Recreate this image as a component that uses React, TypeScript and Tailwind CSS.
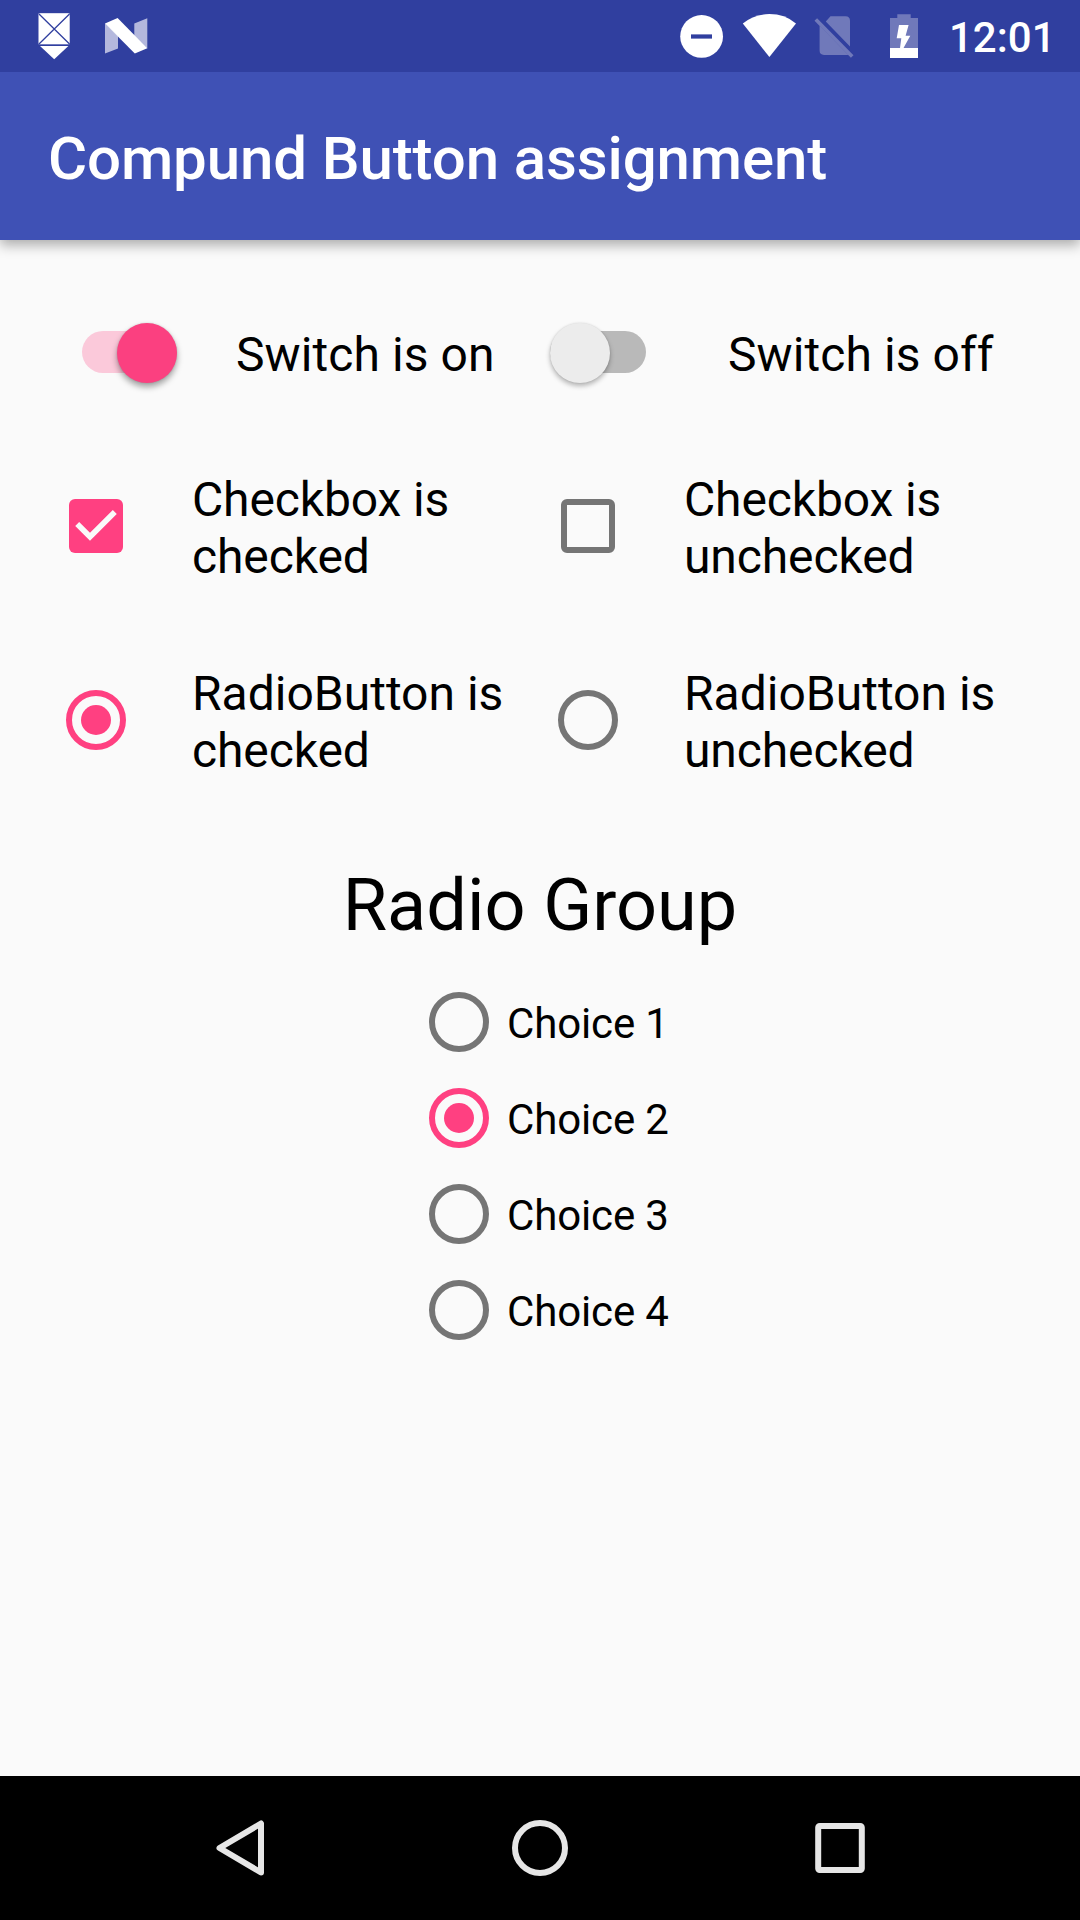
import React from "react";

function StatusBar() {
  return (
    <div className="relative z-10 flex h-[72px] items-start bg-[#303f9f] pl-[36px] text-white">
      <svg width="36" height="72" viewBox="36 0 36 72">
        <rect x="38.2" y="13" width="31.8" height="31.5" rx="1.5" fill="#b4b8dd" />
        <rect x="39" y="13.6" width="30.2" height="30.3" rx="1" fill="#fff" />
        <path d="M39 14L69.5 44M69.5 14L39 44" stroke="#303f9f" strokeWidth="1.3" />
        <path d="M40 46H68.4L54.2 59.3Z" fill="#fff" />
      </svg>
      <svg className="ml-[30px]" width="48" height="72" viewBox="102 0 48 72">
        <path d="M105 23.3L118 36V48.5L105 53.5ZM134.3 23.5L147.3 18.3V48.5L134.3 36Z" fill="#b4b8dd" />
        <path d="M105 23.5L117.6 18.1L147.3 48.3L134.8 53.5Z" fill="#fff" />
      </svg>
      <svg className="ml-[528px]" width="48" height="72" viewBox="678 0 48 72">
        <circle cx="701.6" cy="36.4" r="21.4" fill="#fff" />
        <rect x="691" y="34" width="21" height="5" fill="#303f9f" />
        <rect x="691" y="34" width="21" height="1" fill="#8189c4" />
        <rect x="691" y="38" width="21" height="1" fill="#8189c4" />
      </svg>
      <svg className="ml-[15px]" width="57" height="72" viewBox="741 0 57 72">
        <path d="M769.4 57L742.8 23.5Q754 14.1 769.4 14.1T796 23.5Z" fill="#fff" />
      </svg>
      <svg className="ml-[14px]" width="44" height="72" viewBox="812 0 44 72">
        <path d="M830.5 16.3H845.5Q850 16.3 850 20.8V46.5L825.8 21.4ZM819.6 25.5L848.5 54.9H824Q819.6 54.9 819.6 50.5Z" fill="#7079ba" />
        <path d="M815.8 19.5L852.2 56.5" stroke="#7079ba" strokeWidth="3.6" />
      </svg>
      <svg className="ml-[32px]" width="34" height="72" viewBox="888 0 34 72">
        <path d="M897.3 14.3H910.7V18H918V48H890V18H897.3Z" fill="#7079ba" />
        <rect x="890" y="48" width="28" height="10" fill="#fff" />
        <path d="M899 25H908.6L905.6 35.8H910.3L903.5 48H900L901.3 38.3H896.7Z" fill="#fff" />
      </svg>
      <span className="ml-[27px] mt-[13px] text-[42px] leading-[49px] font-medium">12:01</span>
    </div>
  );
}

function AppBar({ title }: { title: string }) {
  return (
    <header className="relative h-[168px] bg-[#3f51b5] px-12 pt-[52px] shadow-[0_5px_12px_rgba(0,0,0,0.32)]">
      <h1 className="whitespace-nowrap text-[60px] leading-[70px] font-medium tracking-[-0.12px] text-white">{title}</h1>
    </header>
  );
}

function Switch({ on }: { on: boolean }) {
  return on ? (
    <div className="ml-[34px] mt-[5px] flex h-[42px] w-[95px] items-center justify-end rounded-full bg-[#fbc9da]">
      <div className="mt-px h-[60px] w-[60px] shrink-0 rounded-full bg-[#fb4080] shadow-[0_4px_6px_rgba(0,0,0,0.36),0_0_2px_rgba(0,0,0,0.15)]" />
    </div>
  ) : (
    <div className="ml-[10px] mt-[5px] flex h-[42px] w-[96px] items-center rounded-full bg-[#b9b9b9]">
      <div className="mt-px h-[60px] w-[60px] shrink-0 rounded-full bg-[#ececec] shadow-[0_3px_5px_rgba(0,0,0,0.28),0_0_2px_rgba(0,0,0,0.12)]" />
    </div>
  );
}

function CheckBox({ checked }: { checked: boolean }) {
  return checked ? (
    <svg width="54" height="54" viewBox="0 0 54 54">
      <rect width="54" height="54" rx="6" fill="#ff4081" />
      <path d="M8.2 24.9L21 37.7L45.8 12.9" fill="none" stroke="#fafafa" strokeWidth="5.6" />
    </svg>
  ) : (
    <div className="h-[54px] w-[54px] rounded-[6px] border-6 border-[#757575]" />
  );
}

function Radio({ checked }: { checked: boolean }) {
  return checked ? (
    <div className="flex h-[60px] w-[60px] shrink-0 items-center justify-center rounded-full border-6 border-[#ff4081]">
      <div className="h-[30px] w-[30px] rounded-full bg-[#ff4081]" />
    </div>
  ) : (
    <div className="h-[60px] w-[60px] shrink-0 rounded-full border-6 border-[#757575]" />
  );
}

function Option({ control, lines }: { control: React.ReactNode; lines: string[] }) {
  return (
    <div className="flex h-[114px]">
      <div className="mr-12 flex h-[110px] w-24 shrink-0 items-center justify-center">{control}</div>
      <p className="whitespace-nowrap text-[48px] leading-[57px]">
        {lines.map((line) => (
          <span key={line} className={line.startsWith("Radio") ? "block" : "block tracking-[-0.12px]"}>
            {line}
          </span>
        ))}
      </p>
    </div>
  );
}

function NavBar() {
  return (
    <nav className="grid h-[144px] grid-cols-[300px_480px_300px] place-items-center bg-black">
      <svg className="ml-[180px]" width="60" height="60" viewBox="210 1818 60 60" fill="none" stroke="#e6e6e6" strokeWidth="6" strokeLinejoin="round">
        <path d="M261 1823.5V1872.5L219.5 1848Z" />
      </svg>
      <svg width="60" height="60" viewBox="-30 -30 60 60" fill="none" stroke="#e6e6e6" strokeWidth="6">
        <circle r="25" />
      </svg>
      <svg className="mr-[180px]" width="60" height="60" viewBox="-30 -30 60 60" fill="none" stroke="#e6e6e6" strokeWidth="6">
        <rect x="-21.8" y="-22" width="43.6" height="44" rx="1.5" />
      </svg>
    </nav>
  );
}

export default function App() {
  return (
    <div className="flex h-[1920px] w-[1080px] flex-col overflow-hidden bg-[#fafafa] font-['Roboto',sans-serif] text-black">
      <StatusBar />
      <AppBar title="Compund Button assignment" />
      <main className="flex-1 px-12 pt-[86px]">
        <div className="grid grid-cols-2 text-[48px] leading-[57px] tracking-[0.08px]">
          <div className="flex h-[57px]">
            <div className="w-[188px]">
              <Switch on />
            </div>
            <span>Switch is on</span>
          </div>
          <div className="flex h-[57px]">
            <div className="w-[188px]">
              <Switch on={false} />
            </div>
            <span>Switch is off</span>
          </div>
        </div>
        <div className="mt-[88px] grid grid-cols-2 gap-y-20">
          <Option control={<CheckBox checked />} lines={["Checkbox is", "checked"]} />
          <Option control={<CheckBox checked={false} />} lines={["Checkbox is", "unchecked"]} />
          <Option control={<Radio checked />} lines={["RadioButton is", "checked"]} />
          <Option control={<Radio checked={false} />} lines={["RadioButton is", "unchecked"]} />
        </div>
        <h2 className="mt-[85px] text-center text-[72px] leading-[84px]">Radio Group</h2>
        <div className="mt-[26px] pl-[381px]">
          {[1, 2, 3, 4].map((n) => (
            <div key={n} className="flex h-24 items-center gap-[18px]">
              <Radio checked={n === 2} />
              <span className="pt-[3px] text-[42px] leading-[49px] tracking-[-0.14px]">Choice {n}</span>
            </div>
          ))}
        </div>
      </main>
      <NavBar />
    </div>
  );
}
